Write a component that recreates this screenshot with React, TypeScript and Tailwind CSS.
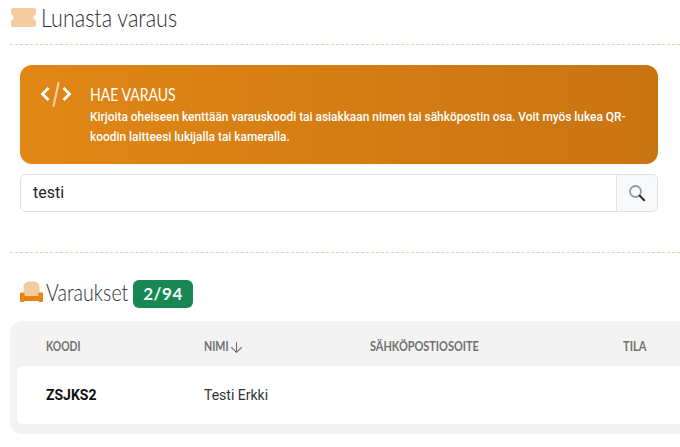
// Lunasta varaus page
import { ArrowDown } from 'lucide-react';

const heading = "font-['Lato',sans-serif]";
const cols = 'grid-cols-[158px_166px_253px_1fr]';

function TicketIcon() {
    return (
        <svg width="27" height="19" viewBox="0 0 27 19" className="shrink-0">
            <path
                d="M3 0h21a2 2 0 0 1 2 2v3.500c0 1-1 1.500-1 1.500 -1 .8-1.500 1.500-1.500 2.500s.5 1.700 1.500 2.500c0 0 1 .5 1 1.500V17a2 2 0 0 1-2 2H3a2 2 0 0 1-2-2v-3.500c0-1 1-1.500 1-1.500 1-.8 1.500-1.500 1.500-2.500S3 7.800 2 7c0 0-1-.5-1-1.500V2a2 2 0 0 1 2-2z"
                fill="#f3cda0"
            />
        </svg>
    );
}

function SofaIcon() {
    return (
        <svg width="23" height="21" viewBox="0 0 23 21" className="mb-[5px] shrink-0">
            <path d="M3.500 15V6A5.500 5.500 0 0 1 9 .5h5A5.500 5.500 0 0 1 19.500 6v9z" fill="#f3cda0" />
            <path
                d="M1 11.500h2.500a1.200 1.200 0 0 1 1.200 1.200V15h13.600v-2.300a1.200 1.200 0 0 1 1.200-1.200H22a1 1 0 0 1 1 1V20a1 1 0 0 1-1 1h-2.500a1 1 0 0 1-1-1H4.500a1 1 0 0 1-1 1H1a1 1 0 0 1-1-1v-7.500a1 1 0 0 1 1-1z"
                fill="#e8851a"
            />
        </svg>
    );
}

function CodeIcon() {
    return (
        <svg width="32" height="26" viewBox="0 0 32 26" fill="none" className="shrink-0">
            <path d="M8.500 6 2.500 12l6 6" stroke="#fff" strokeWidth="2.800" />
            <path d="M23.500 6l6 6-6 6" stroke="#fff" strokeWidth="2.800" />
            <path d="M18.500 1 13.500 24" stroke="#f3cda0" strokeWidth="2.200" strokeLinecap="round" />
        </svg>
    );
}

function SearchIcon() {
    return (
        <svg width="18" height="18" viewBox="0 0 18 18" fill="none">
            <circle cx="7.500" cy="7.500" r="5.500" stroke="#9a9a9a" strokeWidth="1.800" />
            <path d="M11.800 11.800 16.200 16.200" stroke="#333" strokeWidth="2.200" strokeLinecap="round" />
        </svg>
    );
}

function Narrow({ children, className }: { children: React.ReactNode; className: string }) {
    return <span className={`inline-block origin-left whitespace-nowrap ${className}`}>{children}</span>;
}

export default function App() {
    return (
        <div className="h-[447px] w-[680px] overflow-hidden bg-white font-['Roboto',sans-serif] text-[#212529]">
            <div className="pl-[10px]">
                <div className="flex h-[45px] items-center gap-[5px] border-b border-dashed border-[#f6cf9f] pb-[9px]">
                    <TicketIcon />
                    <h1 className={`${heading} text-[25px] font-light text-[#2b2f33]`}>
                        <Narrow className="-ml-px scale-x-[0.86]">Lunasta varaus</Narrow>
                    </h1>
                </div>
            </div>

            <div className="mt-5 ml-5 w-[638px]">
                <div className="flex h-[99px] gap-[18px] rounded-xl bg-gradient-to-r from-[#e18716] to-[#c97412] pt-[17px] pl-5 pr-6 text-white">
                    <CodeIcon />
                    <div>
                        <h2 className={`${heading} text-[18px] leading-[24px]`}>
                            <Narrow className="scale-x-[0.78]">HAE VARAUS</Narrow>
                        </h2>
                        <p className="mt-[1px] text-[11.900px] leading-[20px] font-medium">
                            Kirjoita oheiseen kenttään varauskoodi tai asiakkaan nimen tai sähköpostin osa. Voit myös lukea QR-koodin laitteesi lukijalla tai kameralla.
                        </p>
                    </div>
                </div>

                <div className="mt-[10px] flex h-[38px] rounded-md border border-[#dee2e6]">
                    <div className="flex flex-1 items-center px-3 text-base">testi</div>
                    <div className="flex w-[41px] items-center justify-center rounded-r-md border-l border-[#dee2e6] bg-[#f8f9fa]">
                        <SearchIcon />
                    </div>
                </div>
            </div>

            <div className="mt-[40px] ml-[10px] border-t border-dashed border-[#f6cf9f]" />

            <div className="mt-[27px] ml-5 flex h-[28px] items-center">
                <SofaIcon />
                <h2 className={`${heading} mb-[3px] ml-[3px] w-[87px] text-[23px] font-light text-[#2b2f33]`}>
                    <Narrow className="scale-x-[0.85]">Varaukset</Narrow>
                </h2>
                <span className={`${heading} flex h-[28px] w-[60px] items-center justify-center rounded-md bg-[#198754] text-[17px] font-bold tracking-[0.5px] text-[#f1f8f4]`}>
                    2/94
                </span>
            </div>

            <div className="mt-[13px] ml-[10px] h-[113px] w-[700px] rounded-l-xl bg-[#f3f3f3] pl-[7px]">
                <div className={`${heading} grid h-[45px] ${cols} items-center pt-[7px] pl-[29px] text-[13px] font-bold text-[#707070]`}>
                    <div><Narrow className="scale-x-[0.80]">KOODI</Narrow></div>
                    <div className="flex items-center">
                        <Narrow className="w-[24px] scale-x-[0.82]">NIMI</Narrow>
                        <ArrowDown size={17} strokeWidth={1.500} />
                    </div>
                    <div><Narrow className="scale-x-[0.84]">SÄHKÖPOSTIOSOITE</Narrow></div>
                    <div><Narrow className="scale-x-[0.85]">TILA</Narrow></div>
                </div>
                <div className={`grid h-[58px] ${cols} items-center rounded-l-md bg-white pl-[29px] text-[14px]`}>
                    <div className="font-bold text-[#111]">ZSJKS2</div>
                    <div className="text-[#333]">Testi Erkki</div>
                    <div />
                    <div />
                </div>
            </div>
        </div>
    );
}
